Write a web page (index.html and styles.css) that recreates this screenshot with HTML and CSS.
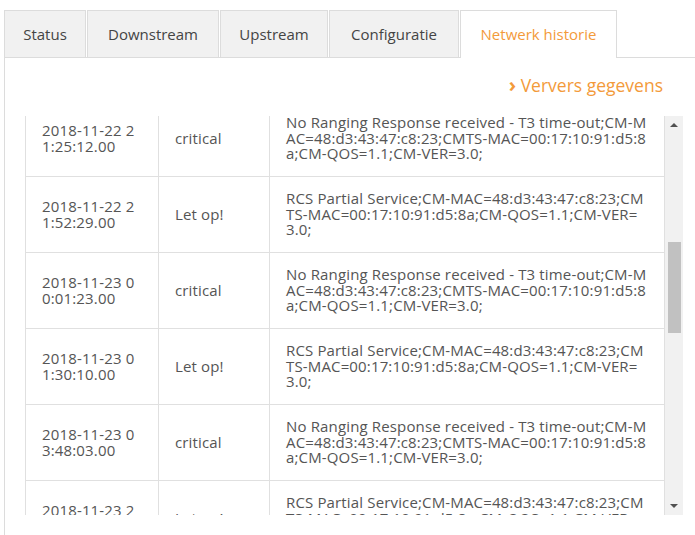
FILE: index.html
```html
<!DOCTYPE html>
<html lang="nl">
<head>
  <meta charset="UTF-8">
  <meta name="viewport" content="width=device-width, initial-scale=1.0">
  <title>Netwerk historie</title>
  <link rel="stylesheet" href="styles.css">
</head>
<body>
  <ul class="tabs">
    <li class="tab">Status</li>
    <li class="tab">Downstream</li>
    <li class="tab">Upstream</li>
    <li class="tab">Configuratie</li>
    <li class="tab active">Netwerk historie</li>
  </ul>
  <div class="panel">
    <div class="toolbar">
      <a class="refresh" href="#"><span class="chev">&rsaquo;</span> Ververs gegevens</a>
    </div>
    <div class="log">
      <div class="log-body">
        <table class="log-table">
          <tr>
            <td class="c-date">2018-11-22 21:25:12.00</td>
            <td class="c-level">critical</td>
            <td class="c-msg">No Ranging Response received - T3 time-out;CM-MAC=48:d3:43:47:c8:23;CMTS-MAC=00:17:10:91:d5:8a;CM-QOS=1.1;CM-VER=3.0;</td>
          </tr>
          <tr>
            <td class="c-date">2018-11-22 21:52:29.00</td>
            <td class="c-level">Let op!</td>
            <td class="c-msg">RCS Partial Service;CM-MAC=48:d3:43:47:c8:23;CMTS-MAC=00:17:10:91:d5:8a;CM-QOS=1.1;CM-VER=3.0;</td>
          </tr>
          <tr>
            <td class="c-date">2018-11-23 00:01:23.00</td>
            <td class="c-level">critical</td>
            <td class="c-msg">No Ranging Response received - T3 time-out;CM-MAC=48:d3:43:47:c8:23;CMTS-MAC=00:17:10:91:d5:8a;CM-QOS=1.1;CM-VER=3.0;</td>
          </tr>
          <tr>
            <td class="c-date">2018-11-23 01:30:10.00</td>
            <td class="c-level">Let op!</td>
            <td class="c-msg">RCS Partial Service;CM-MAC=48:d3:43:47:c8:23;CMTS-MAC=00:17:10:91:d5:8a;CM-QOS=1.1;CM-VER=3.0;</td>
          </tr>
          <tr>
            <td class="c-date">2018-11-23 03:48:03.00</td>
            <td class="c-level">critical</td>
            <td class="c-msg">No Ranging Response received - T3 time-out;CM-MAC=48:d3:43:47:c8:23;CMTS-MAC=00:17:10:91:d5:8a;CM-QOS=1.1;CM-VER=3.0;</td>
          </tr>
          <tr>
            <td class="c-date">2018-11-23 21:14:40.00</td>
            <td class="c-level">Let op!</td>
            <td class="c-msg">RCS Partial Service;CM-MAC=48:d3:43:47:c8:23;CMTS-MAC=00:17:10:91:d5:8a;CM-QOS=1.1;CM-VER=3.0;</td>
          </tr>
        </table>
      </div>
      <div class="scrollbar">
        <span class="arrow up"></span>
        <div class="track"><div class="thumb"></div></div>
        <span class="arrow down"></span>
      </div>
    </div>
  </div>
</body>
</html>
```

FILE: styles.css
```css
body {
  margin: 0;
  font-family: "Open Sans", Arial, sans-serif;
  color: #555;
  background: #fff;
  height: 535px;
  overflow: hidden;
}
.tabs {
  list-style: none;
  margin: 10px 0 0;
  padding: 0 0 0 4px;
  display: flex;
  gap: 1px;
}
.tab {
  height: 46px;
  line-height: 46px;
  padding: 0 18px;
  font-size: 15px;
  color: #444;
  background: #f1f1f1;
  border: 1px solid #dcdcdc;
  border-bottom: none;
  text-align: center;
}
.tab:nth-child(1) { width: 44px; }
.tab:nth-child(2) { width: 94px; }
.tab:nth-child(3) { width: 70px; }
.tab:nth-child(4) { width: 92px; }
.tab.active {
  width: 119px;
  color: #f39a3a;
  background: #fff;
  position: relative;
  height: 47px;
  margin-bottom: -1px;
}
.panel {
  margin-left: 4px;
  border-left: 1px solid #dcdcdc;
  border-top: 1px solid #dcdcdc;
  padding: 0 12px 0 20px;
  height: 477px;
}
.toolbar {
  display: flex;
  justify-content: flex-end;
  height: 58px;
  align-items: center;
  padding: 0 20px 5px 0;
  box-sizing: border-box;
}
.refresh {
  color: #f39a3a;
  text-decoration: none;
  font-size: 17.5px;
}
.chev {
  font-weight: bold;
  font-size: 20px;
}
.log {
  display: flex;
  height: 399px;
}
.log-body {
  flex: 1;
  overflow: hidden;
}
.log-table {
  width: 100%;
  margin-top: -16px;
  border-collapse: collapse;
  table-layout: fixed;
  font-size: 15px;
  letter-spacing: 0.15px;
  line-height: 15.5px;
}
.log-table td {
  border: 1px solid #e0e0e0;
  padding: 0 16px;
  height: 75px;
  vertical-align: middle;
  word-break: break-all;
}
.c-date { width: 100px; }
.c-level { width: 78px; }
.scrollbar {
  width: 18px;
  background: #f1f1f1;
  display: flex;
  flex-direction: column;
  align-items: center;
}
.arrow {
  width: 0;
  height: 0;
  border-left: 4px solid transparent;
  border-right: 4px solid transparent;
  margin: 7px 0;
}
.arrow.up { border-bottom: 4px solid #505050; }
.arrow.down { border-top: 4px solid #505050; }
.track {
  flex: 1;
  width: 13px;
}
.thumb {
  margin-top: 108px;
  height: 91px;
  background: #c1c1c1;
}
```
